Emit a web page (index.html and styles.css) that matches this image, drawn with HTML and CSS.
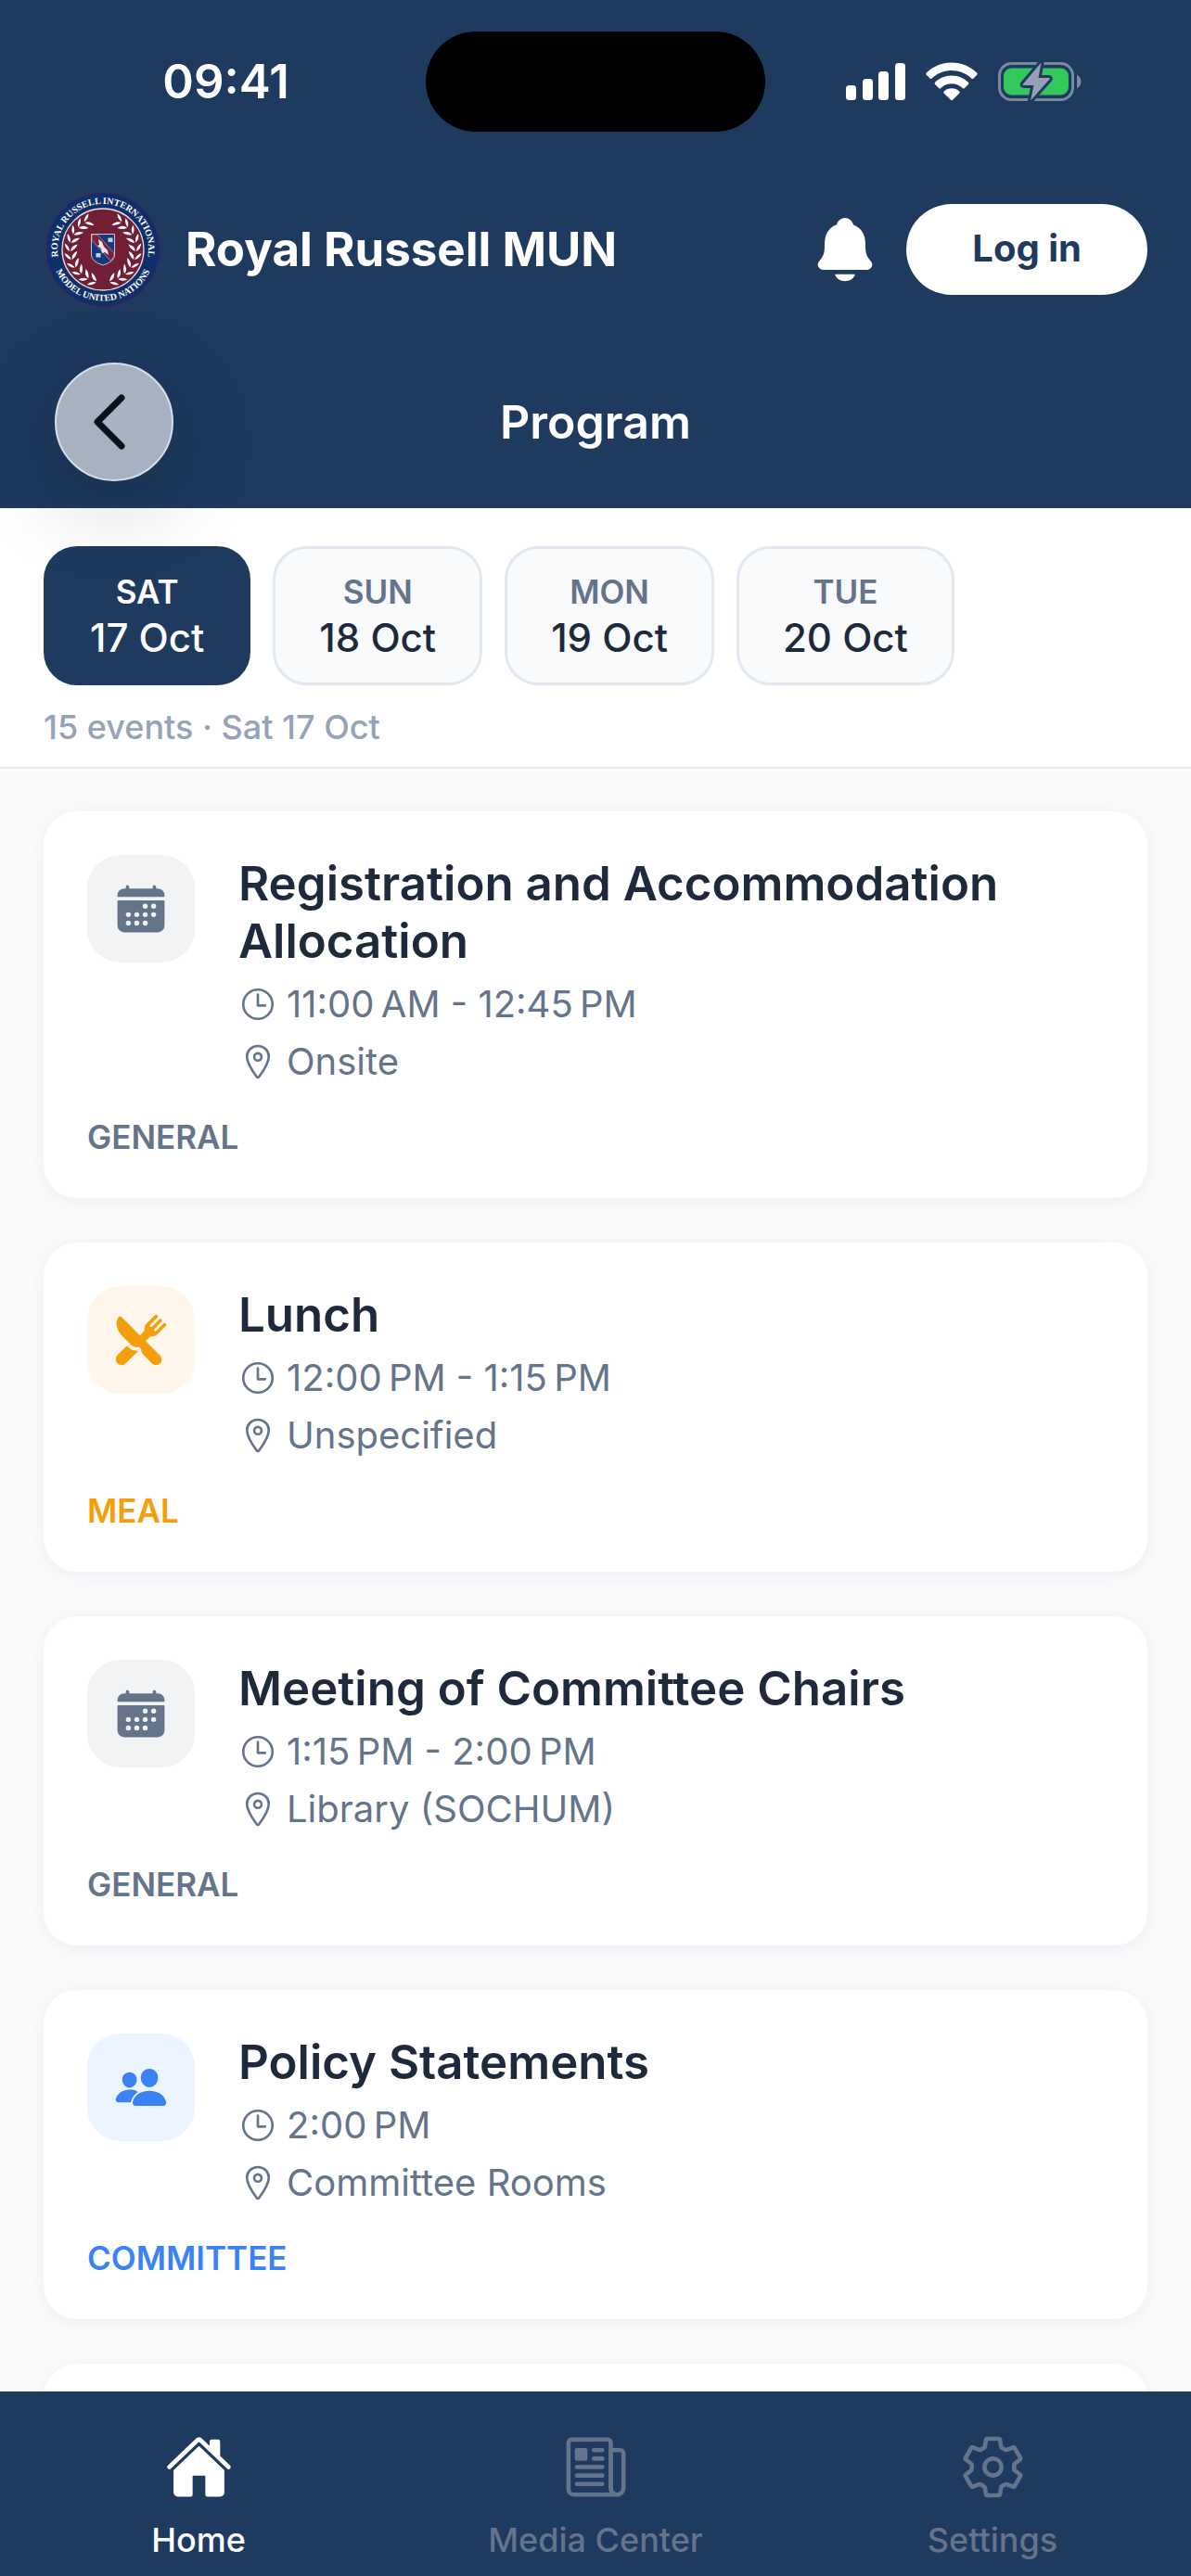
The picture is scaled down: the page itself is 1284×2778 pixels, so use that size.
FILE: index.html
```html
<!DOCTYPE html>
<html lang="en">
<head>
<meta charset="utf-8">
<meta name="viewport" content="width=device-width, initial-scale=1">
<title>Program – Royal Russell MUN</title>
<link rel="stylesheet" href="styles.css">
</head>
<body>
<svg class="sprite" aria-hidden="true">
  <symbol id="i-calendar" viewBox="0 0 512 512"><path d="M480 128a64 64 0 00-64-64h-16V48.45c0-8.61-6.62-16-15.23-16.43A16 16 0 00368 48v16H144V48.45c0-8.61-6.62-16-15.23-16.43A16 16 0 00112 48v16H96a64 64 0 00-64 64v12a4 4 0 004 4h440a4 4 0 004-4zM32 416a64 64 0 0064 64h320a64 64 0 0064-64V179a3 3 0 00-3-3H35a3 3 0 00-3 3zm344-208a24 24 0 11-24 24 24 24 0 0124-24zm0 80a24 24 0 11-24 24 24 24 0 0124-24zm-80-80a24 24 0 11-24 24 24 24 0 0124-24zm0 80a24 24 0 11-24 24 24 24 0 0124-24zm0 80a24 24 0 11-24 24 24 24 0 0124-24zm-80-80a24 24 0 11-24 24 24 24 0 0124-24zm0 80a24 24 0 11-24 24 24 24 0 0124-24zm-80-80a24 24 0 11-24 24 24 24 0 0124-24zm0 80a24 24 0 11-24 24 24 24 0 0124-24z"/></symbol>
  <symbol id="i-meal" viewBox="0 0 512 512"><path d="M357.57 223.94a79.48 79.48 0 0056.58-23.44l77-76.95c6.09-6.09 6.65-16 .85-22.39a16 16 0 00-23.17-.56l-68.63 68.58a12.29 12.29 0 01-17.37 0c-4.79-4.78-4.53-12.86.25-17.64l68.33-68.33a16 16 0 00-.56-23.16A15.62 15.62 0 00440.27 56a16.71 16.71 0 00-11.81 4.9l-68.27 68.26a12.29 12.29 0 01-17.37 0c-4.78-4.78-4.53-12.86.25-17.64l68.33-68.31a16 16 0 00-.56-23.16A15.62 15.62 0 00400.26 16a16.73 16.73 0 00-11.81 4.9L311.5 97.85a79.49 79.49 0 00-23.44 56.59v8.23a16 16 0 01-4.69 11.33l-35.61 35.62a4 4 0 01-5.66 0L68.82 36.33a16 16 0 00-22.58-.06C31.09 51.28 23 72.47 23 97.54c-.1 41.4 21.66 89 56.79 124.08l85.45 85.45A64.79 64.79 0 00211 326a64 64 0 0016.21-2.08 16.24 16.24 0 014.07-.53 15.93 15.93 0 0110.83 4.25l11.39 10.52a16.12 16.12 0 014.6 11.23v5.54a47.73 47.73 0 0013.77 33.65l90.05 91.57.09.1a53.29 53.29 0 0075.36-75.37L302.39 269.9a4 4 0 010-5.66L338 228.63a16 16 0 0111.32-4.69z"/><path d="M211 358a97.32 97.32 0 01-68.36-28.25l-13.86-13.86a8 8 0 00-11.3 0l-85 84.56c-15.15 15.15-20.56 37.45-13.06 59.29a30.63 30.63 0 001.49 3.6C31 484 50.58 496 72 496a55.68 55.68 0 0039.64-16.44L225 365.66a4.69 4.69 0 001.32-3.72v-.26a4.63 4.63 0 00-5.15-4.27A97.09 97.09 0 01211 358z"/></symbol>
  <symbol id="i-people" viewBox="0 0 512 512"><path d="M336 256c-20.56 0-40.44-9.18-56-25.84-15.13-16.25-24.37-37.92-26-61-1.74-24.62 5.77-47.26 21.14-63.76S312 80 336 80c23.83 0 45.38 9.06 60.7 25.52 15.47 16.62 23 39.22 21.26 63.63-1.67 23.11-10.9 44.77-26 61C376.44 246.82 356.57 256 336 256zM467.83 432H204.18a27.71 27.71 0 01-22-10.67 30.22 30.22 0 01-5.26-25.79c8.42-33.81 29.28-61.85 60.32-81.08C264.79 297.4 299.86 288 336 288c36.85 0 71 9 98.71 26.05 31.11 19.13 52 47.33 60.38 81.55a30.27 30.27 0 01-5.32 25.78A27.68 27.68 0 01467.83 432zM147 260c-35.19 0-66.13-32.72-69-72.93-1.42-20.6 5-39.65 18-53.62 12.86-13.83 31-21.45 51-21.45s38 7.66 50.93 21.57c13.1 14.08 19.5 33.09 18 53.52-2.87 40.2-33.8 72.91-68.93 72.91zM212.66 291.45c-17.59-8.6-40.42-12.9-65.65-12.9-29.46 0-58.07 7.68-80.57 21.62-25.51 15.83-42.67 38.88-49.6 66.71a27.39 27.39 0 004.79 23.36A25.32 25.32 0 0041.72 400h111a8 8 0 007.87-6.57c.11-.63.25-1.26.41-1.88 8.48-34.06 28.35-62.84 57.71-83.82a8 8 0 00-.63-13.39c-1.57-.92-3.37-1.89-5.42-2.89z"/></symbol>
  <symbol id="i-clock" viewBox="0 0 512 512"><g fill="none" stroke="currentColor" stroke-width="32"><circle cx="256" cy="256" r="192"/><path d="M256 128v144h96" stroke-linecap="round" stroke-linejoin="round"/></g></symbol>
  <symbol id="i-pin" viewBox="0 0 512 512"><g fill="none" stroke="currentColor" stroke-width="32" stroke-linecap="round" stroke-linejoin="round"><path d="M256 48c-79.5 0-144 61.39-144 137 0 87 96 224.87 131.25 272.49a15.77 15.77 0 0025.5 0C304 409.89 400 272.07 400 185c0-75.61-64.5-137-144-137z"/><circle cx="256" cy="192" r="48"/></g></symbol>
</svg>

<div class="app">
  <header class="header">
    <div class="status">
      <span class="status-time">09:41</span>
      <span class="island"></span>
      <span class="status-icons">
        <svg width="64" height="42" viewBox="0 0 64 42" fill="#fff"><rect x="0" y="25" width="11" height="16" rx="3.500"/><rect x="18" y="18" width="11" height="23" rx="3.500"/><rect x="35" y="10" width="11" height="31" rx="3.500"/><rect x="53" y="1" width="11" height="40" rx="3.500"/></svg>
        <svg width="56" height="42" viewBox="0 0 56 42" fill="#fff"><path d="M28 0.500C39 .5 48.500 5 55.200 11.600q1 1.100 0 2.200l-3.700 3.700q-1.100 1-2.200 0C43.500 12 36 9 28 9S12.500 12 6.700 17.500q-1.100 1-2.200 0L.8 13.800q-1-1.100 0-2.200C7.500 5 17 .5 28 .5z"/><path d="M28 14.500c7 0 13.300 2.800 17.900 7.200q1 1.100 0 2.200l-4 4q-1.100 1-2.200 0C36.500 25 32.500 23.300 28 23.300S19.500 25 16.300 27.900q-1.100 1-2.200 0l-4-4q-1-1.100 0-2.200C14.700 17.300 21 14.500 28 14.500z"/><path d="M28 28.300c3.200 0 6 1.200 8.200 3.100q1.200 1.100 0 2.300l-7 6.900q-1.200 1.100-2.400 0l-7-6.900q-1.200-1.200 0-2.300c2.200-1.900 5-3.100 8.200-3.100z"/></svg>
        <svg width="90" height="44" viewBox="0 0 90 44"><rect x="1.500" y="2.500" width="79" height="39" rx="13" fill="none" stroke="#7a8aa1" stroke-width="3"/><path d="M85 15c6 2 6 12 0 14z" fill="#7a8aa1"/><rect x="6" y="7.500" width="70" height="29" rx="8.500" fill="#34c759"/><path d="M46.500 1.500L27 24.500q-1 1.500 1 1.500h10.500L35 42.500l20.500-23q1-1.500-1-1.500H43.500z" fill="#94a1b4" stroke="#1e3a5f" stroke-width="6" paint-order="stroke" stroke-linejoin="round"/></svg>
      </span>
    </div>

    <div class="brand">
      <svg class="crest" viewBox="8 8 124 124" role="img" aria-label="Royal Russell International Model United Nations">
        <defs>
          <path id="arc-top" d="M21.500 76.800A49 49 0 1 1 118.500 76.800"/>
          <path id="arc-bottom" d="M15 80A56 56 0 0 0 125 80"/>
          <g id="leaves"><path d="M0 0Q-5-2-6-8Q-1-6 0 0zM1 0Q6-2 8-8Q1-6 1 0z"/></g>
        </defs>
        <circle cx="70" cy="70" r="61.500" fill="#0f2f6b" stroke="#4a2350"/>
        <circle cx="70" cy="70" r="44" fill="#701f35" stroke="#e6dfe6" stroke-width="1.300"/>
        <g class="crest-text"><text text-anchor="middle"><textPath href="#arc-top" startOffset="50%">ROYAL RUSSELL INTERNATIONAL</textPath></text>
        <text text-anchor="middle"><textPath href="#arc-bottom" startOffset="50%">MODEL UNITED NATIONS</textPath></text></g>
        <g id="branch" fill="#fff">
          <use href="#leaves" transform="rotate(12 70 70) translate(70 106) rotate(-82)"/>
          <use href="#leaves" transform="rotate(27 70 70) translate(70 106) rotate(-82)"/>
          <use href="#leaves" transform="rotate(42 70 70) translate(70 106) rotate(-82)"/>
          <use href="#leaves" transform="rotate(57 70 70) translate(70 106) rotate(-82)"/>
          <use href="#leaves" transform="rotate(72 70 70) translate(70 106) rotate(-82)"/>
          <use href="#leaves" transform="rotate(87 70 70) translate(70 106) rotate(-82)"/>
          <use href="#leaves" transform="rotate(102 70 70) translate(70 106) rotate(-82)"/>
          <use href="#leaves" transform="rotate(117 70 70) translate(70 106) rotate(-82)"/>
          <use href="#leaves" transform="rotate(132 70 70) translate(70 106) rotate(-82)"/>
          <use href="#leaves" transform="rotate(146 70 70) translate(70 106) rotate(-82)"/>
        </g>
        <use href="#branch" transform="matrix(-1 0 0 1 140 0)"/>
        <path d="M57.500 53.500h25V76q0 7-12.500 11-12.500-4-12.500-11z" fill="#17397c" stroke="#c9c3d3"/>
        <path d="M58 54h6l18 20v4l-4 4-20-22z" fill="#7b2138" stroke="#c9c3d3" stroke-width=".6"/>
        <path d="M65 59l4 3 2 5 4 4 1 5-4-3-3 1-1-5-4-3 2-1z" fill="#efe9ee"/>
        <path d="M75.500 57.500h5v4.500h-5zM62.500 74h5v4.500h-5z" fill="#c6cfe2"/>
      </svg>
      <span class="brand-name">Royal Russell MUN</span>
      <button class="icon-button" type="button" aria-label="Notifications">
        <svg width="78" height="78" viewBox="0 0 512 512" fill="#fff"><path d="M440.080 341.310c-1.660-2-3.290-4-4.890-5.930-22-26.610-35.310-42.670-35.310-118 0-39-9.330-71-27.720-95-13.560-17.730-31.890-31.180-56.050-41.120a3 3 0 01-.82-.67C306.600 51.490 282.820 32 256 32s-50.590 19.490-59.280 48.560a3.130 3.130 0 01-.81.65c-56.380 23.210-83.780 67.740-83.780 136.140 0 75.360-13.290 91.420-35.310 118-1.600 1.930-3.230 3.890-4.890 5.930a35.160 35.160 0 00-4.650 37.620c6.170 13 19.320 21.070 34.330 21.070H410.500c14.940 0 28-8.060 34.190-21a35.170 35.170 0 00-4.610-37.660zM256 480a80.060 80.060 0 0070.440-42.130 4 4 0 00-3.540-5.870H189.120a4 4 0 00-3.550 5.870A80.060 80.060 0 00256 480z"/></svg>
      </button>
      <button class="login" type="button">Log in</button>
    </div>

    <div class="titlebar">
      <button class="back" type="button" aria-label="Back">
        <svg width="36" height="60" viewBox="0 0 36 60" fill="none" stroke="#06121f" stroke-width="7" stroke-linecap="round" stroke-linejoin="round"><path d="M30 4L4 30l26 26"/></svg>
      </button>
      <h1 class="page-title">Program</h1>
    </div>
  </header>

  <section class="days">
    <div class="day-list">
      <button class="day day-active" type="button"><span class="day-name">SAT</span><span class="day-date">17 Oct</span></button>
      <button class="day" type="button"><span class="day-name">SUN</span><span class="day-date">18 Oct</span></button>
      <button class="day" type="button"><span class="day-name">MON</span><span class="day-date">19 Oct</span></button>
      <button class="day" type="button"><span class="day-name">TUE</span><span class="day-date">20 Oct</span></button>
    </div>
    <p class="summary">15 events · Sat 17 Oct</p>
  </section>

  <main class="events">
    <article class="card general">
      <div class="card-main">
        <span class="tile"><svg><use href="#i-calendar"/></svg></span>
        <div class="details">
          <h2>Registration and Accommodation Allocation</h2>
          <p><svg><use href="#i-clock"/></svg>11:00&#8239;AM - 12:45&#8239;PM</p>
          <p><svg><use href="#i-pin"/></svg>Onsite</p>
        </div>
      </div>
      <span class="tag">GENERAL</span>
    </article>
    <article class="card meal">
      <div class="card-main">
        <span class="tile"><svg><use href="#i-meal"/></svg></span>
        <div class="details">
          <h2>Lunch</h2>
          <p><svg><use href="#i-clock"/></svg>12:00&#8239;PM - 1:15&#8239;PM</p>
          <p><svg><use href="#i-pin"/></svg>Unspecified</p>
        </div>
      </div>
      <span class="tag">MEAL</span>
    </article>
    <article class="card general">
      <div class="card-main">
        <span class="tile"><svg><use href="#i-calendar"/></svg></span>
        <div class="details">
          <h2>Meeting of Committee Chairs</h2>
          <p><svg><use href="#i-clock"/></svg>1:15&#8239;PM - 2:00&#8239;PM</p>
          <p><svg><use href="#i-pin"/></svg>Library (SOCHUM)</p>
        </div>
      </div>
      <span class="tag">GENERAL</span>
    </article>
    <article class="card committee">
      <div class="card-main">
        <span class="tile"><svg><use href="#i-people"/></svg></span>
        <div class="details">
          <h2>Policy Statements</h2>
          <p><svg><use href="#i-clock"/></svg>2:00&#8239;PM</p>
          <p><svg><use href="#i-pin"/></svg>Committee Rooms</p>
        </div>
      </div>
      <span class="tag">COMMITTEE</span>
    </article>
    <article class="card"></article>
  </main>

  <nav class="tabs">
    <a class="tab tab-active" href="#home">
      <svg viewBox="0 0 512 512" fill="currentColor"><path d="M261.560 101.280a8 8 0 00-11.060 0L66.400 277.150a8 8 0 00-2.470 5.790L63.900 448a32 32 0 0032 32H192a16 16 0 0016-16V328a8 8 0 018-8h80a8 8 0 018 8v136a16 16 0 0016 16h96.060a32 32 0 0032-32V282.940a8 8 0 00-2.470-5.790z"/><path d="M490.910 244.150l-74.800-71.560V64a16 16 0 00-16-16h-48a16 16 0 00-16 16v32l-57.920-55.380C272.770 35.140 264.710 32 256 32c-8.680 0-16.720 3.140-22.140 8.630l-212.700 203.500c-6.220 6-7 15.870-1.340 22.370A16 16 0 0043 267.560L250.500 69.280a8 8 0 0111.060 0l207.520 198.280a16 16 0 0022.590-.44c6.140-6.360 5.630-16.860-.76-22.970z"/></svg>
      <span>Home</span>
    </a>
    <a class="tab" href="#media">
      <svg viewBox="0 0 512 512"><g fill="none" stroke="currentColor" stroke-width="32" stroke-linecap="round" stroke-linejoin="round"><path d="M368 415.860V72a24.070 24.070 0 00-24-24H72a24.070 24.070 0 00-24 24v352a40.120 40.120 0 0040 40h328"/><path d="M416 464a48 48 0 01-48-48V128h72a24 24 0 0124 24v264a48 48 0 01-48 48z"/><path d="M240 128h64M240 192h64M112 256h192M112 320h192M112 384h192"/></g><path fill="currentColor" d="M176 208h-64a16 16 0 01-16-16v-64a16 16 0 0116-16h64a16 16 0 0116 16v64a16 16 0 01-16 16z"/></svg>
      <span>Media Center</span>
    </a>
    <a class="tab" href="#settings">
      <svg viewBox="0 0 512 512"><path fill="none" stroke="currentColor" stroke-width="32" stroke-linecap="round" stroke-linejoin="round" d="M262.290 192.310a64 64 0 1057.400 57.400 64.130 64.130 0 00-57.400-57.400zM416.390 256a154.340 154.340 0 01-1.530 20.790l45.210 35.460a10.810 10.810 0 012.450 13.750l-42.770 74a10.810 10.810 0 01-13.140 4.590l-44.900-18.080a16.110 16.110 0 00-15.170 1.750A164.480 164.480 0 01325 400.800a15.940 15.940 0 00-8.820 12.140l-6.730 47.890a11.080 11.080 0 01-10.680 9.170h-85.540a11.110 11.110 0 01-10.690-8.870l-6.720-47.820a16.070 16.070 0 00-9-12.220 155.300 155.300 0 01-21.460-12.570 16 16 0 00-15.110-1.710l-44.890 18.070a10.810 10.810 0 01-13.140-4.580l-42.770-74a10.800 10.800 0 012.450-13.750l38.210-30a16.050 16.050 0 006-14.080c-.36-4.170-.58-8.330-.58-12.500s.21-8.270.58-12.350a16 16 0 00-6.070-13.940l-38.190-30A10.810 10.810 0 0149.480 186l42.770-74a10.810 10.810 0 0113.140-4.590l44.900 18.080a16.110 16.110 0 0015.170-1.750A164.480 164.480 0 01187 111.200a15.940 15.940 0 008.820-12.140l6.730-47.890A11.080 11.080 0 01213.230 42h85.540a11.110 11.110 0 0110.690 8.870l6.720 47.820a16.070 16.070 0 009 12.220 155.300 155.300 0 0121.460 12.570 16 16 0 0015.110 1.710l44.890-18.070a10.810 10.810 0 0113.140 4.580l42.770 74a10.800 10.800 0 01-2.450 13.750l-38.210 30a16.050 16.050 0 00-6.050 14.080c.33 4.140.55 8.300.55 12.470z"/></svg>
      <span>Settings</span>
    </a>
  </nav>
</div>
</body>
</html>
```
FILE: styles.css
```css
:root {
  --navy: #1e3a5f;
  --ink: #1e293b;
  --slate: #64748b;
  --muted: #94a3b8;
  --line: #e2e8f0;
  --page: #f8fafc;
  --edge: 47px;
}

* { box-sizing: border-box; }

body {
  margin: 0;
  background: var(--page);
  color: var(--ink);
  font-family: Inter, "Liberation Sans", sans-serif;
}

h1, h2, p { margin: 0; }

button {
  margin: 0;
  padding: 0;
  border: 0;
  background: none;
  color: inherit;
  font: inherit;
}

svg { display: block; flex: none; }

.sprite { display: none; }

.app {
  display: flex;
  flex-direction: column;
  height: 100vh;
}

/* Header */
.header {
  position: relative;
  z-index: 1;
  background: var(--navy);
  color: #fff;
}

.status {
  display: grid;
  grid-template-columns: 1fr 366px 1fr;
  align-items: center;
  height: 176px;
}

.status-time {
  padding-left: 28px;
  font-size: 51px;
  font-weight: 600;
  line-height: 60px;
  text-align: center;
}

.island {
  height: 108px;
  border-radius: 54px;
  background: #000;
}

.status-icons {
  display: flex;
  align-items: center;
  justify-content: center;
  gap: 22px;
  padding-right: 32px;
}

.brand {
  display: flex;
  align-items: center;
  height: 186px;
  padding: 0 var(--edge) 0 49px;
}

.crest { width: 124px; height: 124px; }

.crest-text {
  fill: #fff;
  font-family: "Liberation Serif", serif;
  font-size: 10px;
  font-weight: 700;
}

.brand-name {
  flex: 1;
  margin-left: 27px;
  font-size: 51px;
  font-weight: 700;
  line-height: 60px;
}

.login {
  height: 98px;
  margin-left: 27px;
  padding: 0 71px 3px;
  border-radius: 49px;
  background: #fff;
  color: var(--navy);
  font-size: 40px;
  font-weight: 700;
}

.titlebar {
  display: grid;
  grid-template-columns: 1fr auto 1fr;
  align-items: center;
  height: 186px;
  padding: 0 59px;
}

.back {
  display: flex;
  align-items: center;
  justify-content: center;
  width: 128px;
  height: 128px;
  padding-right: 8px;
  border: 2px solid #d3e0ea;
  border-radius: 50%;
  background: #a6b2c0;
  box-shadow: 0 24px 100px rgba(0, 0, 0, .2);
}

.page-title {
  font-size: 50px;
  font-weight: 600;
  line-height: 60px;
}

/* Day picker */
.days {
  padding: 41px var(--edge) 21px;
  border-bottom: 2px solid var(--line);
  background: #fff;
}

.day-list { display: flex; gap: 24px; }

.day {
  display: flex;
  flex-direction: column;
  align-items: center;
  padding: 21px 47px 23px;
  border: 3px solid var(--line);
  border-radius: 36px;
  background: var(--page);
}

.day-name {
  color: var(--slate);
  font-size: 35px;
  font-weight: 600;
  line-height: 50px;
}

.day-date {
  font-size: 42px;
  font-weight: 500;
  line-height: 50px;
}

.day-active {
  border-color: var(--navy);
  background: var(--navy);
  color: #fff;
}

.day-active .day-name { color: #fff; }

.summary {
  margin-top: 23px;
  color: var(--muted);
  font-size: 36px;
  font-weight: 500;
  line-height: 44px;
}

/* Event list */
.events {
  display: flex;
  flex: 1;
  flex-direction: column;
  gap: 48px;
  min-height: 0;
  padding: 46px var(--edge) 0;
  overflow-y: auto;
  scrollbar-width: none;
}

.card {
  flex: none;
  padding: 47px 47px 45px;
  border-radius: 36px;
  background: #fff;
  box-shadow: 0 3px 18px rgba(15, 23, 42, .05);
}

.card-main { display: flex; gap: 47px; }

.tile {
  display: flex;
  flex: none;
  align-items: center;
  justify-content: center;
  width: 116px;
  height: 116px;
  border-radius: 36px;
}

.tile svg { width: 58px; height: 58px; fill: currentColor; }

.details { flex: 1; }

.details h2 {
  font-size: 51px;
  font-weight: 600;
  line-height: 62px;
}

.details p {
  display: flex;
  align-items: center;
  gap: 10px;
  color: var(--slate);
  font-size: 40px;
  line-height: 50px;
}

.details p + p, .details h2 + p { margin-top: 12px; }

.details p svg { width: 42px; height: 42px; }

.tag {
  display: block;
  margin-top: 35px;
  font-size: 35px;
  font-weight: 600;
  line-height: 42px;
}

.general .tile { background: #f1f3f5; color: var(--slate); }
.general .tag { color: var(--slate); }
.meal .tile { background: #fef6ea; color: #f59e0b; }
.meal .tag { color: #f59e0b; }
.committee .tile { background: #ecf4ff; color: #3b82f6; }
.committee .tag { color: #3b82f6; }

/* Tab bar */
.tabs {
  display: grid;
  grid-template-columns: repeat(3, 1fr);
  height: 199px;
  padding-top: 45px;
  background: var(--navy);
}

.tab {
  display: flex;
  flex-direction: column;
  align-items: center;
  gap: 20px;
  color: #64748b;
  font-size: 36px;
  font-weight: 500;
  line-height: 44px;
  text-decoration: none;
}

.tab svg { width: 73px; height: 73px; }

.tab-active { color: #fff; }
```
